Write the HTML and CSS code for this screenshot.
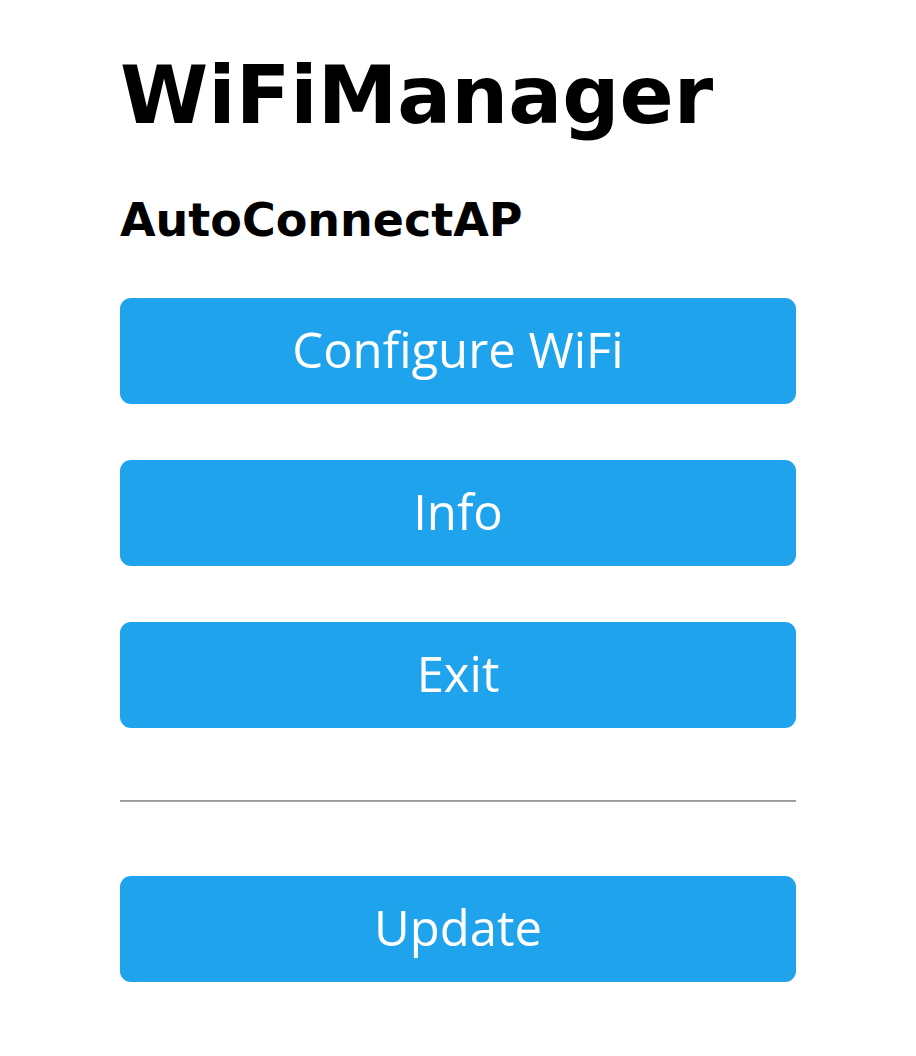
FILE: index.html
```html
<!DOCTYPE html>
<html>
<head>
<meta charset="utf-8">
<link rel="stylesheet" href="styles.css">
</head>
<body>
<div class="wrap">
  <h1 class="title">WiFiManager</h1>
  <h3 class="subtitle">AutoConnectAP</h3>
  <div class="buttons">
    <button class="btn">Configure WiFi</button>
    <button class="btn">Info</button>
    <button class="btn">Exit</button>
  </div>
  <hr class="rule">
  <button class="btn">Update</button>
</div>
</body>
</html>
```

FILE: styles.css
```css
html, body {
  margin: 0;
  padding: 0;
  background: #fff;
}
.wrap {
  width: 676px;
  margin: 0 auto;
  padding-top: 46px;
  display: flex;
  flex-direction: column;
  font-family: "DejaVu Sans", sans-serif;
  color: #000;
}
.title {
  margin: 0;
  font-size: 80px;
  line-height: 100px;
  font-weight: bold;
}
.subtitle {
  margin: 46px 0 0;
  font-size: 46px;
  line-height: 56px;
  font-weight: bold;
}
.buttons {
  margin-top: 50px;
  display: flex;
  flex-direction: column;
  gap: 56px;
}
.btn {
  display: block;
  box-sizing: border-box;
  width: 100%;
  height: 106px;
  border: 0;
  border-radius: 11px;
  background: #1fa3ec;
  color: #fff;
  font-family: "Open Sans", "Noto Sans", sans-serif;
  font-size: 49px;
  line-height: 102px;
  padding: 0 0 4px;
  text-align: center;
}
.rule {
  width: 100%;
  margin: 72px 0 74px;
  border: 0;
  border-top: 1px solid #999999;
  border-bottom: 1px solid #a8a8a8;
  height: 0;
}
```
